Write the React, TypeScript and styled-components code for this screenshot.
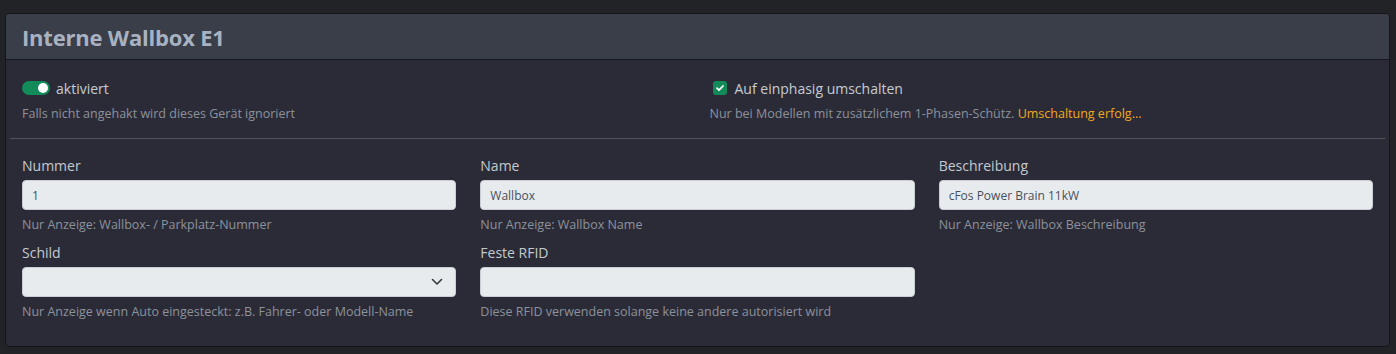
import React, { useState } from 'react'
import styled, { createGlobalStyle } from 'styled-components'

const GlobalStyle = createGlobalStyle`
  body {
    margin: 0;
    background: #212327;
    font-family: "Open Sans", "Noto Sans", sans-serif;
  }
`

const Page = styled.div`
  padding: 13px 6px 9px 5px;
`

const Card = styled.div`
  background: #2b2b37;
  border: 1px solid #14151a;
  border-radius: 4px;
  overflow: hidden;
`

const Header = styled.div`
  height: 45px;
  display: flex;
  align-items: center;
  padding: 0 16px;
  background: #3a3e49;
  border-bottom: 1px solid #17181c;
`

const Title = styled.h2`
  margin: 0;
  font-size: 22px;
  font-weight: 700;
  color: #a8b2c0;
  letter-spacing: -0.2px;
`

const Body = styled.div`
  padding: 20px 16px 16px;
`

const Grid = styled.div<{ $cols: number }>`
  display: grid;
  grid-template-columns: repeat(${p => p.$cols}, 1fr);
  column-gap: 24px;
`

const Divider = styled.hr`
  border: 0;
  border-top: 1px solid #50525c;
  margin: 16px -12px 17px;
`

const CheckRow = styled.label`
  display: flex;
  align-items: center;
  gap: 6px;
  font-size: 14px;
  color: #c6cbd2;
  cursor: pointer;
  height: 16px;
`

const SwitchTrack = styled.span<{ $on: boolean }>`
  position: relative;
  width: 28px;
  height: 14px;
  border-radius: 7px;
  background: ${p => (p.$on ? '#138a5a' : '#555')};
  flex-shrink: 0;
  &::after {
    content: '';
    position: absolute;
    top: 2px;
    left: ${p => (p.$on ? '16px' : '2px')};
    width: 10px;
    height: 10px;
    border-radius: 50%;
    background: #fff;
  }
`

const CheckBox = styled.span<{ $on: boolean }>`
  width: 14px;
  height: 14px;
  border-radius: 3px;
  background: ${p => (p.$on ? '#138a5a' : '#e9ecef')};
  display: flex;
  align-items: center;
  justify-content: center;
  flex-shrink: 0;
  margin-left: 3px;
  margin-right: 2px;
`

const Help = styled.div`
  font-size: 12.5px;
  color: #8b929c;
  margin-top: 9px;
  white-space: nowrap;
`

const Link = styled.span`
  color: #f2a81d;
`

const Field = styled.div`
  display: flex;
  flex-direction: column;
  min-width: 0;
  margin-bottom: 10px;
`

const Label = styled.label`
  font-size: 14px;
  color: #c4c9d0;
  margin-bottom: 5px;
`

const Input = styled.input`
  box-sizing: border-box;
  height: 30px;
  width: 100%;
  padding: 0 9px;
  font-family: inherit;
  font-size: 12px;
  color: #46505c;
  background: #e8ebee;
  border: 1px solid #c9ced4;
  border-radius: 4px;
  outline: none;
`

const SelectWrap = styled.div`
  position: relative;
  height: 30px;
  background: #e8ebee;
  border: 1px solid #c9ced4;
  border-radius: 4px;
  box-sizing: border-box;
  svg {
    position: absolute;
    right: 12px;
    top: 10px;
  }
`

const FieldHelp = styled.div`
  font-size: 12.5px;
  color: #8b929c;
  margin-top: 6px;
  white-space: nowrap;
`

export default function App() {
  const [active, setActive] = useState(true)
  const [single, setSingle] = useState(true)

  return (
    <Page>
      <GlobalStyle />
      <Card>
        <Header>
          <Title>Interne Wallbox E1</Title>
        </Header>
        <Body>
          <Grid $cols={2}>
            <div>
              <CheckRow onClick={() => setActive(!active)}>
                <SwitchTrack $on={active} />
                aktiviert
              </CheckRow>
              <Help>Falls nicht angehakt wird dieses Gerät ignoriert</Help>
            </div>
            <div>
              <CheckRow onClick={() => setSingle(!single)}>
                <CheckBox $on={single}>
                  {single && (
                    <svg width="10" height="10" viewBox="0 0 10 10">
                      <path d="M2 5.2l2 2 4-4.2" stroke="#fff" strokeWidth="1.8" fill="none" strokeLinecap="round" strokeLinejoin="round" />
                    </svg>
                  )}
                </CheckBox>
                Auf einphasig umschalten
              </CheckRow>
              <Help>
                Nur bei Modellen mit zusätzlichem 1-Phasen-Schütz. <Link>Umschaltung erfolg...</Link>
              </Help>
            </div>
          </Grid>
          <Divider />
          <Grid $cols={3}>
            <Field>
              <Label>Nummer</Label>
              <Input defaultValue="1" />
              <FieldHelp>Nur Anzeige: Wallbox- / Parkplatz-Nummer</FieldHelp>
            </Field>
            <Field>
              <Label>Name</Label>
              <Input defaultValue="Wallbox" />
              <FieldHelp>Nur Anzeige: Wallbox Name</FieldHelp>
            </Field>
            <Field>
              <Label>Beschreibung</Label>
              <Input defaultValue="cFos Power Brain 11kW" />
              <FieldHelp>Nur Anzeige: Wallbox Beschreibung</FieldHelp>
            </Field>
            <Field>
              <Label>Schild</Label>
              <SelectWrap>
                <svg width="12" height="8" viewBox="0 0 12 8">
                  <path d="M1.5 1.5l4.5 4.5 4.5-4.5" stroke="#343a40" strokeWidth="1.6" fill="none" strokeLinecap="round" strokeLinejoin="round" />
                </svg>
              </SelectWrap>
              <FieldHelp>Nur Anzeige wenn Auto eingesteckt: z.B. Fahrer- oder Modell-Name</FieldHelp>
            </Field>
            <Field>
              <Label>Feste RFID</Label>
              <Input defaultValue="" />
              <FieldHelp>Diese RFID verwenden solange keine andere autorisiert wird</FieldHelp>
            </Field>
          </Grid>
        </Body>
      </Card>
    </Page>
  )
}
